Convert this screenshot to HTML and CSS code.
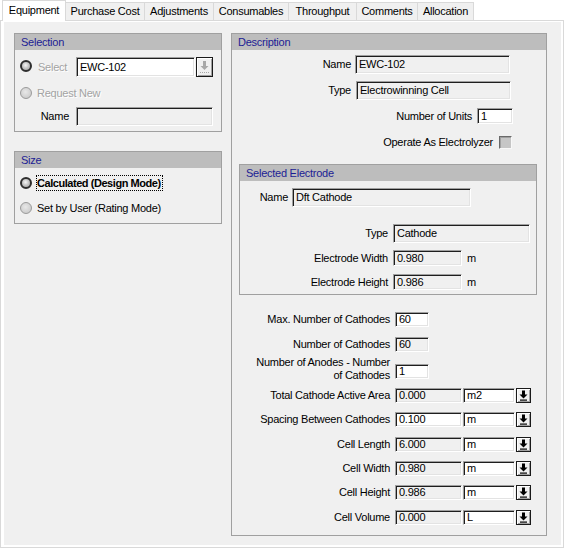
FILE: index.html
```html
<!DOCTYPE html>
<html>
<head>
<meta charset="utf-8">
<link rel="stylesheet" href="styles.css">
</head>
<body>
<div class="tabs">
  <div class="tab active t-equip">Equipment</div>
  <div class="tab t-purch">Purchase Cost</div>
  <div class="tab t-adj">Adjustments</div>
  <div class="tab t-cons">Consumables</div>
  <div class="tab t-thru">Throughput</div>
  <div class="tab t-comm">Comments</div>
  <div class="tab t-alloc">Allocation</div>
</div>
<div class="page">
  <div class="content">
    <div class="col-left">
      <section class="panel p-sel">
        <div class="phead">Selection</div>
        <div class="pbody sel-body">
          <div class="srow srow-select">
            <span class="radio on"></span>
            <span class="dis opt-select">Select</span>
            <div class="box wh b-select">EWC-102</div>
            <div class="ddbtn ddbtn-dis">
              <svg width="13" height="16" viewBox="0 0 13 16"><path d="M5 2h3v5h2.5L6.5 11 2.5 7H5z" fill="#a8a8a8"/><path d="M2 13.5h9" stroke="#a8a8a8" stroke-width="1" stroke-dasharray="1 1"/></svg>
            </div>
          </div>
          <div class="srow srow-new">
            <span class="radio"></span>
            <span class="dis opt-new">Request New</span>
          </div>
          <div class="srow srow-name">
            <span class="lbl l-selname">Name</span>
            <div class="box ro b-selname"></div>
          </div>
        </div>
      </section>
      <section class="panel p-size">
        <div class="phead">Size</div>
        <div class="pbody size-body">
          <div class="zrow zrow-1">
            <span class="radio on"></span>
            <span class="zopt focus">Calculated (Design Mode)</span>
          </div>
          <div class="zrow zrow-2">
            <span class="radio"></span>
            <span class="zopt">Set by User (Rating Mode)</span>
          </div>
        </div>
      </section>
    </div>
    <section class="panel p-desc">
      <div class="phead">Description</div>
      <div class="pbody">
        <div class="row r-dname"><span class="lbl lw119 mr4">Name</span><div class="box ro w155 h19">EWC-102</div></div>
        <div class="row r-dtype"><span class="lbl lw119 mr5">Type</span><div class="box ro w155 h19">Electrowinning Cell</div></div>
        <div class="row r-units"><span class="lbl lw240 mr5">Number of Units</span><div class="box wh w36 h16">1</div></div>
        <div class="row r-oper"><span class="lbl lw261 mr6">Operate As Electrolyzer</span><span class="check"></span></div>

        <section class="panel p-elec">
          <div class="phead">Selected Electrode</div>
          <div class="pbody">
            <div class="row r-ename"><span class="lbl lw48 mr4">Name</span><div class="box ro w179 h19">Dft Cathode</div></div>
            <div class="row r-etype"><span class="lbl lw148 mr5">Type</span><div class="box ro w137 h19">Cathode</div></div>
            <div class="row r-ew"><span class="lbl lw148 mr5">Electrode Width</span><div class="box ro w69 h16">0.980</div><span class="unit">m</span></div>
            <div class="row r-eh"><span class="lbl lw148 mr5">Electrode Height</span><div class="box ro w69 h16">0.986</div><span class="unit">m</span></div>
          </div>
        </section>

        <div class="row r-max"><span class="lbl lw158 mr5">Max. Number of Cathodes</span><div class="box wh w34 h15">60</div></div>
        <div class="row r-ncath"><span class="lbl lw158 mr5">Number of Cathodes</span><div class="box ro w34 h15">60</div></div>
        <div class="row r-anodes"><span class="lbl lw158 mr5 two">Number of Anodes - Number<br>of Cathodes</span><div class="box wh w34 h15 anodes-box">1</div></div>
        <div class="row r-total"><span class="lbl lw158 mr5">Total Cathode Active Area</span><div class="box ro w67 h15">0.000</div><div class="box wh combo">m2</div><div class="ddbtn"><svg width="13" height="13" viewBox="0 0 13 13"><path d="M5 1.5h3v4h2.5L6.5 9.5 2.5 5.5H5z" fill="#000"/><rect x="3" y="10.5" width="7" height="1.2" fill="#000"/></svg></div></div>
        <div class="row r-space"><span class="lbl lw158 mr5">Spacing Between Cathodes</span><div class="box wh w67 h15">0.100</div><div class="box wh combo">m</div><div class="ddbtn"><svg width="13" height="13" viewBox="0 0 13 13"><path d="M5 1.5h3v4h2.5L6.5 9.5 2.5 5.5H5z" fill="#000"/><rect x="3" y="10.5" width="7" height="1.2" fill="#000"/></svg></div></div>
        <div class="row r-len"><span class="lbl lw158 mr5">Cell Length</span><div class="box ro w67 h15">6.000</div><div class="box wh combo">m</div><div class="ddbtn"><svg width="13" height="13" viewBox="0 0 13 13"><path d="M5 1.5h3v4h2.5L6.5 9.5 2.5 5.5H5z" fill="#000"/><rect x="3" y="10.5" width="7" height="1.2" fill="#000"/></svg></div></div>
        <div class="row r-wid"><span class="lbl lw158 mr5">Cell Width</span><div class="box ro w67 h15">0.980</div><div class="box wh combo">m</div><div class="ddbtn"><svg width="13" height="13" viewBox="0 0 13 13"><path d="M5 1.5h3v4h2.5L6.5 9.5 2.5 5.5H5z" fill="#000"/><rect x="3" y="10.5" width="7" height="1.2" fill="#000"/></svg></div></div>
        <div class="row r-hgt"><span class="lbl lw158 mr5">Cell Height</span><div class="box ro w67 h15">0.986</div><div class="box wh combo">m</div><div class="ddbtn"><svg width="13" height="13" viewBox="0 0 13 13"><path d="M5 1.5h3v4h2.5L6.5 9.5 2.5 5.5H5z" fill="#000"/><rect x="3" y="10.5" width="7" height="1.2" fill="#000"/></svg></div></div>
        <div class="row r-vol"><span class="lbl lw158 mr5">Cell Volume</span><div class="box ro w67 h15">0.000</div><div class="box wh combo">L</div><div class="ddbtn"><svg width="13" height="13" viewBox="0 0 13 13"><path d="M5 1.5h3v4h2.5L6.5 9.5 2.5 5.5H5z" fill="#000"/><rect x="3" y="10.5" width="7" height="1.2" fill="#000"/></svg></div></div>
      </div>
    </section>
  </div>
</div>
</body>
</html>
```
FILE: styles.css
```css
* { box-sizing: border-box; }
html, body { margin: 0; padding: 0; background: #fff; }
body {
  font: 11px/13px "Liberation Sans", Arial, sans-serif;
  letter-spacing: -0.25px;
  color: #000;
  width: 564px;
  height: 549px;
  overflow: hidden;
}

/* tabs */
.tabs { display: flex; align-items: flex-start; height: 20px; }
.tab {
  height: 18px; margin-top: 2px; margin-left: -1px;
  border: 1px solid #d9d9d9; border-bottom: 0;
  background: #f0f0f0; text-align: center; line-height: 17px;
  white-space: nowrap;
}
.tab.active {
  height: 21px; margin-top: 0; margin-left: 2px;
  background: #fff; position: relative; z-index: 1; line-height: 18px;
}
.t-equip { width: 64px; }
.t-purch { width: 80px; }
.t-adj { width: 70px; }
.t-cons { width: 76px; }
.t-thru { width: 69px; }
.t-comm { width: 62px; }
.t-alloc { width: 57px; }

/* page */
.page {
  height: 528px;
  border: 1px solid #d9d9d9;
  background: #fff;
  padding: 1px 2px 2px 3px;
}
.content {
  height: 100%;
  background: #f0f0f0;
  display: flex; align-items: flex-start; gap: 9px;
  padding: 11px 0 0 10px;
}
.col-left { width: 208px; flex: none; }

/* panels */
.panel { border: 1px solid #a0a0a0; background: #f0f0f0; }
.phead {
  height: 16px; line-height: 16px; background: #bdbdbd;
  color: #1c1c94; padding-left: 6px;
}
.p-sel { height: 99px; }
.p-size { height: 73px; margin-top: 19px; }
.p-desc { width: 316px; height: 503px; flex: none; }
.p-elec { width: 298px; height: 131px; margin: 15px 0 0 7px; }

/* selection panel */
.srow { display: flex; align-items: center; }
.srow-select { margin-top: 7px; height: 20px; padding-left: 5px; }
.srow-select .radio { margin-top: -2px; }
.srow-new { margin-top: 9px; height: 14px; padding-left: 5px; }
.srow-name { margin-top: 7px; }
.dis { color: #a3a3a3; text-shadow: 1px 1px 0 #fff; }
.opt-select { width: 38px; margin-left: 6px; line-height: 14px; }
.opt-new { margin-left: 5px; }
.b-select { width: 119px; height: 20px; }
.l-selname { width: 54px; margin-right: 7px; }
.b-selname { width: 137px; height: 19px; }

/* size panel */
.zrow { display: flex; align-items: center; height: 16px; padding-left: 5px; }
.zrow-1 { margin-top: 7px; }
.zrow-2 { margin-top: 9px; }
.zrow .radio { margin-right: 4px; }
.zopt { border: 1px solid transparent; padding: 0 1px 0 0; line-height: 14px; }
.zopt.focus { border: 1px dotted #000; font-weight: bold; letter-spacing: -0.45px; }

/* radio & check */
.radio {
  width: 12px; height: 12px; flex: none; border-radius: 50%;
  border: 1px solid #9a9a9a;
  background: radial-gradient(circle at 45% 40%, #e8e8e8 0, #d2d2d2 60%, #c4c4c4 100%);
}
.radio.on {
  border: 2px solid #2e2e2e;
  background: radial-gradient(circle at 45% 40%, #f6f6f6 0, #c8c8c8 45%, #9c9c9c 100%);
}
.check {
  width: 13px; height: 13px; flex: none;
  border: 1px solid; border-color: #6a6a6a #f8f8f8 #f8f8f8 #6a6a6a;
  background: #c6c6c6;
  box-shadow: inset 1px 1px 0 #a0a0a0;
}

/* generic rows */
.row { display: flex; align-items: center; }
.lbl { flex: none; text-align: right; white-space: nowrap; }
.lbl.two { line-height: 13px; height: 26px; }
.lw48 { width: 48px; } .lw119 { width: 119px; } .lw148 { width: 148px; }
.lw158 { width: 158px; } .lw240 { width: 240px; } .lw261 { width: 261px; }
.mr4 { margin-right: 4px; } .mr5 { margin-right: 5px; } .mr6 { margin-right: 6px; }

.r-dname { margin-top: 5px; }
.r-dtype { margin-top: 7px; }
.r-units { margin-top: 8px; }
.r-oper { margin-top: 12px; }
.r-ename { margin-top: 7px; }
.r-etype { margin-top: 17px; }
.r-ew { margin-top: 7px; }
.r-eh { margin-top: 8px; }
.r-max { margin-top: 17px; }
.r-ncath { margin-top: 10px; }
.r-anodes { margin-top: 4px; align-items: flex-start; }
.anodes-box { margin-top: 8px; }
.r-total { margin-top: 6px; }
.r-space { margin-top: 9px; }
.r-len { margin-top: 10px; }
.r-wid { margin-top: 9px; }
.r-hgt { margin-top: 9px; }
.r-vol { margin-top: 10px; }

/* sunken boxes */
.box {
  flex: none; display: flex; align-items: center;
  padding-left: 3px; white-space: nowrap; overflow: hidden;
  border: 1px solid; border-color: #a0a0a0 #fff #fff #a0a0a0;
  box-shadow: inset 1px 1px 0 #1e1e1e, inset -1px -1px 0 #e3e3e3;
}
.box.ro { background: #f0f0f0; }
.box.wh { background: #fff; }
.w34 { width: 34px; } .w36 { width: 36px; } .w67 { width: 67px; } .w69 { width: 69px; }
.w137 { width: 137px; } .w155 { width: 155px; } .w179 { width: 179px; }
.h15 { height: 15px; } .h16 { height: 16px; } .h19 { height: 19px; }
.combo { width: 52px; height: 15px; margin-left: 1px; }
.unit { margin-left: 5px; }

/* dropdown buttons */
.ddbtn {
  flex: none; width: 15px; height: 15px; margin-left: 1px;
  border: 1px solid #1a1a1a; background: #f0f0f0;
  box-shadow: inset 1px 1px 0 #fff, inset -1px -1px 0 #a0a0a0;
  display: flex; align-items: center; justify-content: center;
}
.ddbtn svg { display: block; }
.ddbtn-dis { width: 17px; height: 20px; margin-left: 1px; }
```
